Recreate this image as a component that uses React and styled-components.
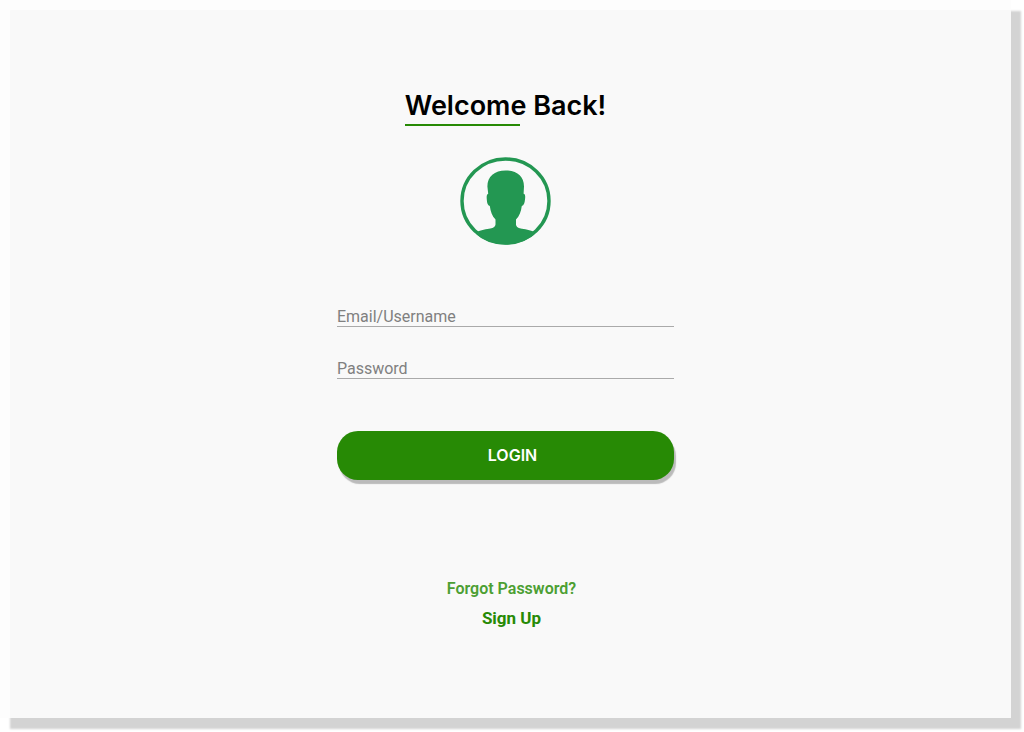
import React from 'react'
import styled, { createGlobalStyle, ThemeProvider } from 'styled-components'

const theme = {
  colors: {
    primary: '#278a05',
    primaryLight: '#4c9f33',
    avatar: '#239752',
    background: '#f9f9f9',
    rim: '#fdfdfd',
    shadow: '#d3d3d3',
    buttonShadow: '#bbbbbb',
    line: '#aaaaaa',
    placeholder: '#808080',
    dark: '#000000',
    white: '#ffffff',
  },
  fonts: {
    title: '"Inter", sans-serif',
    body: '"Roboto", sans-serif',
  },
}

function Avatar() {
  return (
    <AvatarStyled viewBox="0 0 91 88" role="img" aria-label="User">
      <defs>
        <clipPath id="avatar-disc">
          <ellipse cx="45.5" cy="44" rx="45" ry="43.5" />
        </clipPath>
      </defs>
      <ellipse className="ring" cx="45.5" cy="44" rx="43.5" ry="42" />
      <path
        clipPath="url(#avatar-disc)"
        d="M45.7 13.5 C57 13.5 64 19.5 64 29.5 L63.6 36.8 C65.4 37.2 65.4 39.5 65 42.5 C64.6 46 64 48.4 61.8 48.9 C61 54.5 59.5 59 56 62.5 L56 67.5 C56.3 70.4 59 71.2 62 71.8 C67 72.7 70 73 74 74.8 L78 90 L12 90 L17 74.8 C21 73 24 72.7 29 71.8 C32.5 71.2 35 70.4 35.5 67.5 L35.5 62.5 C32 59 30.6 54.5 29.8 48.9 C27.6 48.4 27 46 26.8 42.5 C26.5 39.5 26.6 37.2 28.2 36.8 L27.4 29.5 C27.4 19.5 34.5 13.5 45.7 13.5 Z"
      />
    </AvatarStyled>
  )
}

function Field({ id, label, type }) {
  return <InputStyled id={id} name={id} type={type} placeholder={label} aria-label={label} />
}

export default function App() {
  return (
    <ThemeProvider theme={theme}>
      <GlobalStyle />
      <Card>
        <Title>Welcome Back!</Title>
        <Avatar />
        <LoginForm onSubmit={(event) => event.preventDefault()}>
          <Field id="username" type="text" label="Email/Username" />
          <Field id="password" type="password" label="Password" />
          <LoginButton type="submit">LOGIN</LoginButton>
        </LoginForm>
        <Links>
          <LinkStyled href="#forgot">Forgot Password?</LinkStyled>
          <LinkStyled href="#signup" $strong>Sign Up</LinkStyled>
        </Links>
      </Card>
    </ThemeProvider>
  )
}

const GlobalStyle = createGlobalStyle`
  * {
    box-sizing: border-box;
  }

  body {
    margin: 0;
    background: #ffffff;
  }
`

const Card = styled.main`
  display: flex;
  flex-direction: column;
  align-items: center;
  min-height: calc(100vh - 14px);
  margin: 0 13px 14px 0;
  padding: 88px 24px 80px;
  background: ${({ theme }) => theme.colors.background};
  box-shadow:
    inset 10px 10px 1px ${({ theme }) => theme.colors.rim},
    10px 11px 2px ${({ theme }) => theme.colors.shadow};
`

const Title = styled.h1`
  margin: 0;
  font-family: ${({ theme }) => theme.fonts.title};
  font-size: 27px;
  font-weight: 600;
  line-height: 36px;
  color: ${({ theme }) => theme.colors.dark};

  &::after {
    content: '';
    display: block;
    width: 57%;
    height: 2px;
    background: ${({ theme }) => theme.colors.primary};
  }
`

const AvatarStyled = styled.svg`
  width: 91px;
  height: 88px;
  margin-top: 31px;
  fill: ${({ theme }) => theme.colors.avatar};

  .ring {
    fill: none;
    stroke: ${({ theme }) => theme.colors.avatar};
    stroke-width: 3.4px;
  }
`

const LoginForm = styled.form`
  display: flex;
  flex-direction: column;
  gap: 30px;
  width: 35%;
  min-width: 260px;
  margin-top: 60px;
`

const InputStyled = styled.input`
  width: 100%;
  height: 22px;
  padding: 1px 0 0;
  border: none;
  border-bottom: 1px solid ${({ theme }) => theme.colors.line};
  border-radius: 0;
  outline: none;
  background: transparent;
  font-family: ${({ theme }) => theme.fonts.body};
  font-size: 16px;

  &::placeholder {
    color: ${({ theme }) => theme.colors.placeholder};
    opacity: 1;
  }
`

const LoginButton = styled.button`
  height: 49px;
  margin-top: 22px;
  padding: 0 0 2px 14px;
  border: none;
  border-radius: 21px;
  cursor: pointer;
  background: ${({ theme }) => theme.colors.primary};
  box-shadow: 2px 4px 1px ${({ theme }) => theme.colors.buttonShadow};
  color: ${({ theme }) => theme.colors.white};
  font-family: ${({ theme }) => theme.fonts.title};
  font-size: 16px;
  font-weight: 600;
`

const Links = styled.nav`
  display: flex;
  flex-direction: column;
  align-items: center;
  gap: 5px;
  margin-top: 97px;
  padding-left: 12px;
`

const LinkStyled = styled.a`
  font-family: ${({ theme }) => theme.fonts.body};
  font-size: ${({ $strong }) => ($strong ? '17px' : '16px')};
  font-weight: ${({ $strong }) => ($strong ? 700 : 600)};
  line-height: 24px;
  text-decoration: none;
  color: ${({ $strong, theme }) => ($strong ? theme.colors.primary : theme.colors.primaryLight)};
`
